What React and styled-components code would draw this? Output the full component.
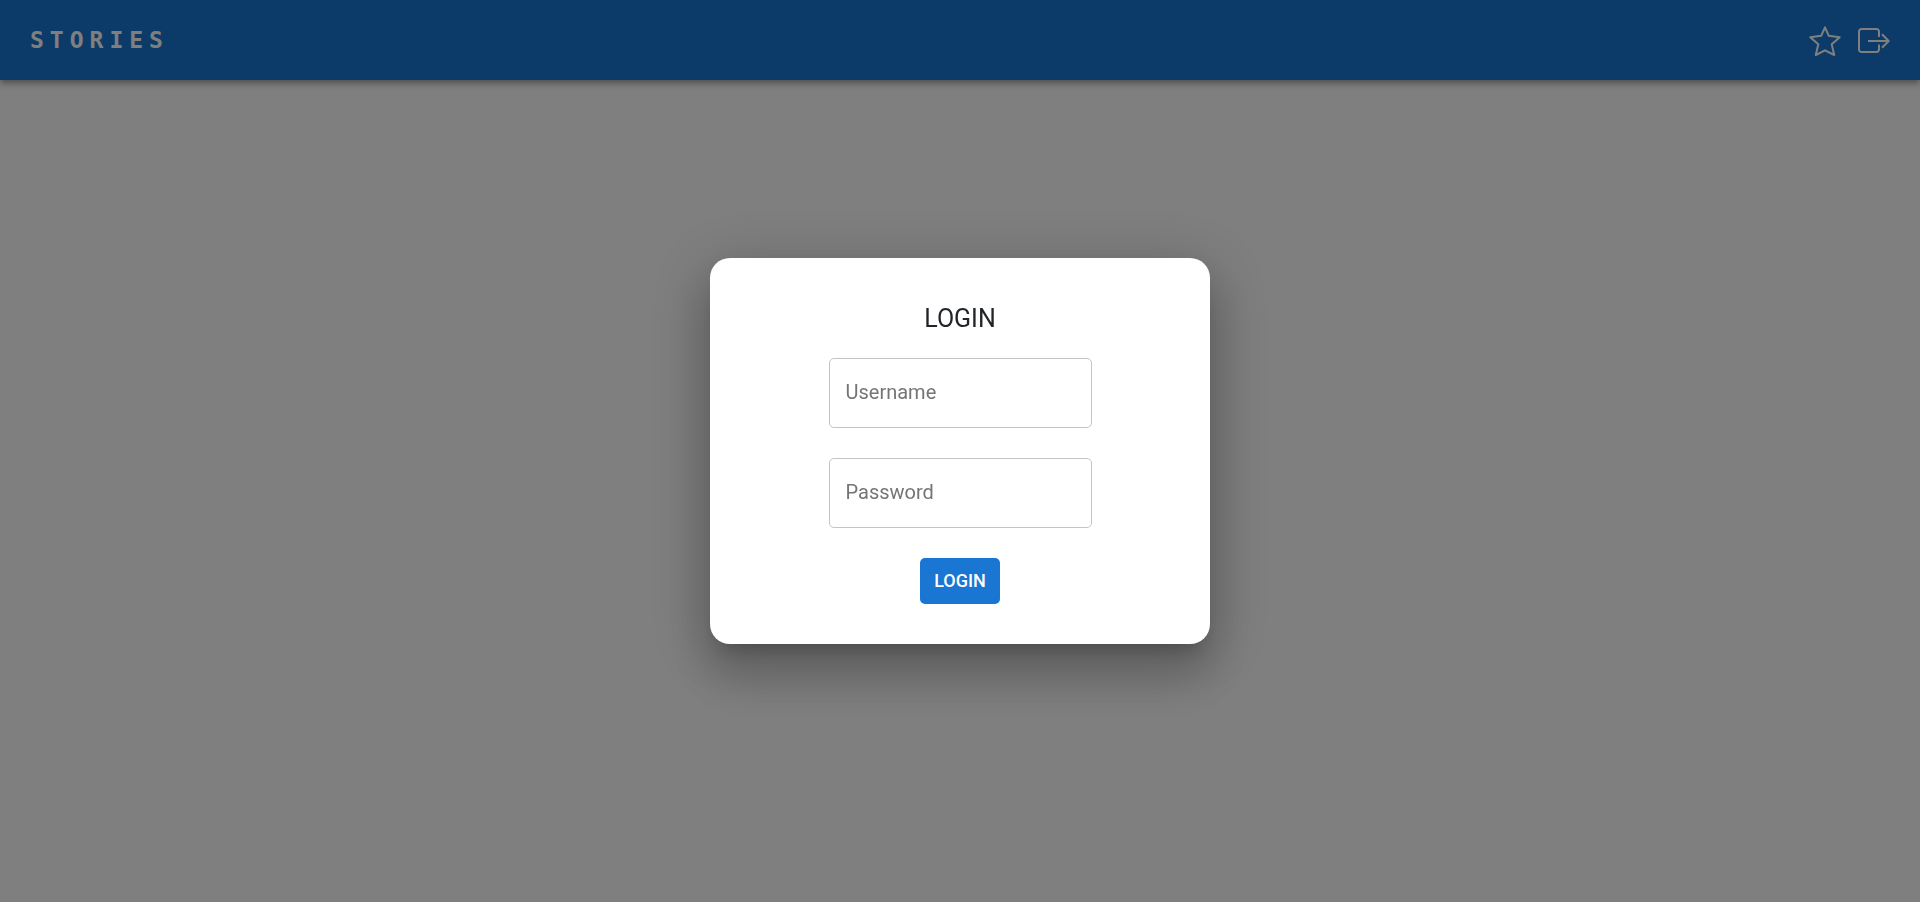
import React from "react";
import styled, { createGlobalStyle } from "styled-components";

const GlobalStyle = createGlobalStyle`
  *, *::before, *::after { box-sizing: border-box; }
  body {
    margin: 0;
    background: #fff;
    color: #212529;
    font-family: Roboto, "Liberation Sans", sans-serif;
  }
`;

const Page = styled.div`
  min-height: 100vh;
`;

const AppBar = styled.header`
  position: sticky;
  top: 0;
  display: flex;
  align-items: center;
  justify-content: space-between;
  min-height: 80px;
  padding: 0 30px;
  background: #1976d2;
  color: #fff;
  box-shadow: 0 3px 5px -1px rgba(0, 0, 0, 0.2),
    0 5px 6px 0 rgba(0, 0, 0, 0.14), 0 1px 12px 0 rgba(0, 0, 0, 0.12);
`;

const Brand = styled.a`
  color: inherit;
  font-family: "DejaVu Sans Mono", monospace;
  font-size: 23px;
  font-weight: 700;
  line-height: 40px;
  letter-spacing: 6px;
  text-decoration: none;
`;

const Actions = styled.nav`
  display: flex;
  gap: 17px;
`;

const IconButton = styled.button`
  display: flex;
  padding: 0;
  border: 0;
  background: none;
  color: inherit;
  cursor: pointer;
`;

const Icon = styled.svg.attrs({ viewBox: "0 0 32 32", "aria-hidden": true })`
  width: 32px;
  height: 32px;
  fill: none;
  stroke: currentColor;
  stroke-width: 2;
  stroke-linejoin: round;
`;

const Backdrop = styled.div`
  position: fixed;
  inset: 0;
  display: flex;
  align-items: center;
  justify-content: center;
  background: rgba(0, 0, 0, 0.5);
`;

const Dialog = styled.form`
  display: flex;
  flex-direction: column;
  align-items: center;
  gap: 30px;
  width: 500px;
  max-width: 100%;
  padding: 40px;
  border-radius: 20px;
  background: #fff;
  box-shadow: 0 14px 19px -9px rgba(0, 0, 0, 0.2),
    0 30px 48px 4px rgba(0, 0, 0, 0.18), 0 11px 58px 12px rgba(0, 0, 0, 0.15);
`;

const Title = styled.h1`
  margin: 0 0 -12px;
  font-size: 25px;
  font-weight: 400;
  line-height: 42px;
`;

const Field = styled.input`
  width: 263px;
  height: 70px;
  padding: 0 16px 2px;
  border: 1px solid #c4c4c4;
  border-radius: 5px;
  background: transparent;
  color: inherit;
  font: inherit;
  font-size: 20px;

  &::placeholder {
    color: #757575;
    opacity: 1;
  }
`;

const SubmitButton = styled.button`
  min-width: 80px;
  padding: 8px 12px;
  border: 0;
  border-radius: 5px;
  background: #1976d2;
  color: #fff;
  font-family: inherit;
  font-size: 18px;
  font-weight: 500;
  line-height: 30px;
  cursor: pointer;
`;

export default function App() {
  return (
    <Page>
      <GlobalStyle />
      <AppBar>
        <Brand href="/">STORIES</Brand>
        <Actions>
          <IconButton type="button" aria-label="Favourites">
            <Icon>
              <path d="M16 3.4 L19.8 11.8 L30.7 13.2 L22.7 20.2 L25.2 31 L16 26.3 L6.8 31 L9.3 20.2 L1.3 13.2 L12.2 11.8 Z" />
            </Icon>
          </IconButton>
          <IconButton type="button" aria-label="Sign out">
            <Icon>
              <path d="M21 13 V7.5 A2.5 2.5 0 0 0 18.5 5 H3.5 A2.5 2.5 0 0 0 1 7.5 V25.5 A2.5 2.5 0 0 0 3.5 28 H18.5 A2.5 2.5 0 0 0 21 25.5 V20.5" />
              <path d="M10 17 H31 M24 10.3 L30.7 17 L24 23.7" />
            </Icon>
          </IconButton>
        </Actions>
      </AppBar>
      <Backdrop>
        <Dialog role="dialog" aria-modal="true" aria-labelledby="login-title">
          <Title id="login-title">LOGIN</Title>
          <Field type="text" name="username" placeholder="Username" aria-label="Username" />
          <Field type="password" name="password" placeholder="Password" aria-label="Password" />
          <SubmitButton type="submit">LOGIN</SubmitButton>
        </Dialog>
      </Backdrop>
    </Page>
  );
}
